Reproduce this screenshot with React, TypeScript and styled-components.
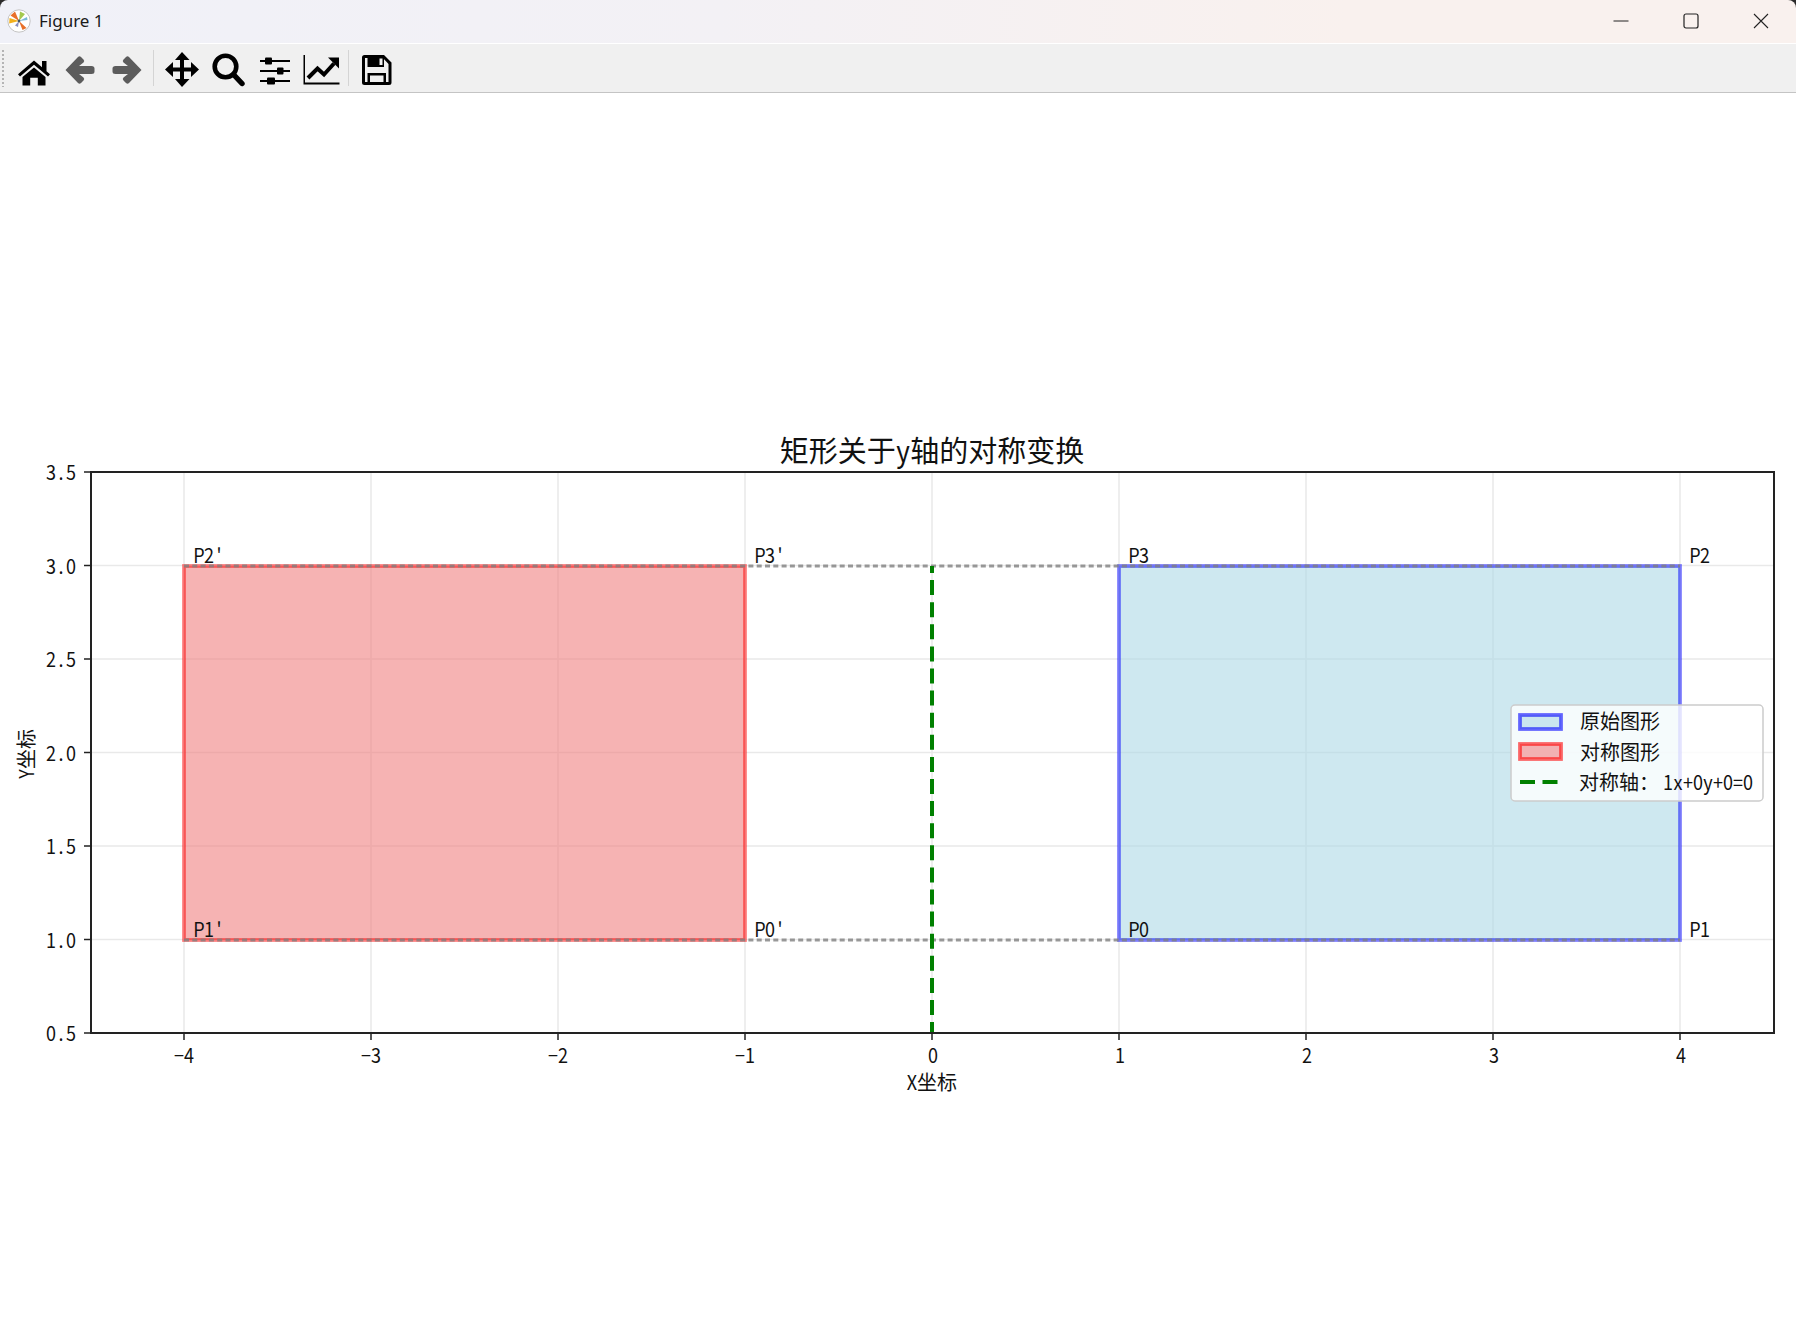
import React from 'react';
import styled, { createGlobalStyle } from 'styled-components';

const GlobalStyle = createGlobalStyle`
  html, body {
    margin: 0;
    padding: 0;
    background: #fff;
    overflow: hidden;
  }
`;

const Window = styled.div`
  width: 1796px;
  height: 1319px;
  display: flex;
  flex-direction: column;
  background: #2b2b2b;
  font-family: 'Noto Sans', 'Noto Sans CJK SC', sans-serif;
`;

const TitleBar = styled.div`
  height: 43px;
  flex: none;
  display: flex;
  align-items: center;
  justify-content: space-between;
  padding-left: 7px;
  border-radius: 8px 8px 0 0;
  background: linear-gradient(90deg, #f0f1f8 0%, #f3f1f5 40%, #f9f1ee 75%, #f9f1ee 100%);
  border-bottom: 1px solid #fff;
`;

const TitleGroup = styled.div`
  display: flex;
  align-items: center;
  gap: 8px;
  padding-bottom: 2px;
`;

const TitleText = styled.span`
  font-size: 17px;
  color: #1a1a1a;
`;

const WinButtons = styled.div`
  display: flex;
  align-items: center;
  height: 100%;
`;

const WinButton = styled.div`
  width: 70px;
  height: 100%;
  display: flex;
  align-items: center;
  justify-content: center;
  padding-bottom: 2px;
  box-sizing: border-box;
`;

const Toolbar = styled.div`
  height: 48px;
  flex: none;
  display: flex;
  align-items: center;
  background: #f0f0f0;
  border-bottom: 1px solid #c4c4c4;
  padding-left: 2px;
`;

const Grip = styled.div`
  width: 2px;
  height: 38px;
  margin-right: 6.5px;
  flex: none;
  background-image: radial-gradient(circle, #b4b4b4 0.8px, transparent 1px);
  background-size: 2px 4px;
`;

const ToolButton = styled.svg<{ $muted?: boolean }>`
  width: 46.5px;
  height: 48px;
  flex: none;
  display: block;
  color: ${(p) => (p.$muted ? '#5c5c5c' : '#000')};
  fill: currentColor;
  stroke: none;
`;

const Separator = styled.div`
  width: 1px;
  height: 36px;
  margin: 0 4.5px 0 3px;
  background: #d4d4d4;
  flex: none;
`;

const Canvas = styled.div`
  flex: 1;
  background: #fff;
  min-height: 0;
`;

const Plot = styled.svg`
  display: block;
  width: 1796px;
  height: 1226px;
`;

const Label = styled.text<{ $size: number }>`
  font-family: 'Noto Sans CJK SC', 'Liberation Sans', sans-serif;
  font-size: ${(p) => p.$size}px;
  fill: #111;
`;

// pixel mapping of the data axes, svg origin sits under the toolbar
const TOP = 93;
const xPx = (v: number) => 932 + v * 187;
const yPx = (v: number) => 1033 - (v - 0.5) * 187;

const isWide = (c: string) => c.charCodeAt(0) > 0x2e80;

// SimHei look: every latin glyph sits in a half cell, cjk in a full cell
function CellText({ x, y, size, children, anchor = 'start', rotate }: {
  x: number; y: number; size: number; children: string; anchor?: 'start' | 'middle' | 'end'; rotate?: boolean;
}) {
  const chars = Array.from(children);
  const total = chars.reduce((sum, c) => sum + (isWide(c) ? size : size / 2), 0);
  let pos = anchor === 'start' ? 0 : anchor === 'middle' ? -total / 2 : -total;
  return (
    <g transform={`translate(${x} ${y})${rotate ? ' rotate(-90)' : ''}`}>
      {chars.map((c, i) => {
        const wide = isWide(c);
        const cell = wide ? size : size / 2;
        const at = pos + cell / 2;
        pos += cell;
        return (
          <Label
            key={i}
            $size={size}
            textAnchor="middle"
            transform={wide ? `translate(${at} 0)` : `translate(${at} 0) scale(0.9 1)`}
          >
            {c}
          </Label>
        );
      })}
    </g>
  );
}

const xTicks = [-4, -3, -2, -1, 0, 1, 2, 3, 4];
const yTicks = [0.5, 1, 1.5, 2, 2.5, 3, 3.5];

const points = [
  { name: 'P0', x: 1, y: 1 },
  { name: 'P1', x: 4, y: 1 },
  { name: 'P2', x: 4, y: 3 },
  { name: 'P3', x: 1, y: 3 },
  { name: "P0'", x: -1, y: 1 },
  { name: "P1'", x: -4, y: 1 },
  { name: "P2'", x: -4, y: 3 },
  { name: "P3'", x: -1, y: 3 },
];

function MplLogo() {
  return (
    <svg width="24" height="24" viewBox="0 0 24 24">
      <circle cx="12" cy="12" r="11.2" fill="#fff" stroke="#bdbdbd" strokeWidth="0.9" />
      <path d="M12 12 L3.5 6.5 L8 2.5 Z" fill="#e8702a" />
      <path d="M12 12 L2.5 9 L2.2 14.5 Z" fill="#f2b01e" />
      <path d="M12 12 L13 2.5 L18 5 Z" fill="#a4c94e" />
      <path d="M12 12 L20 8 L20.5 11 Z" fill="#7ab9d8" />
      <path d="M12 12 L19.5 19 L15.5 21 Z" fill="#e8702a" />
      <path d="M12 12 L11 18 L8 16.5 Z" fill="#8a8fc0" />
      <circle cx="12" cy="12" r="1.4" fill="#44586a" />
    </svg>
  );
}

// the toolbar glyphs are drawn in a 46.5x48 cell
function HomeIcon() {
  return (
    <ToolButton viewBox="0 0 46.5 48">
      <path d="M23 16.5 L31 23.3 V17 H35.5 V27.2 L39 30.2 L37 32.6 L23 20.8 L9 32.6 L7 30.2 Z" />
      <path d="M23 23.5 L34.5 33 V41.5 H26.8 V33.8 H19.2 V41.5 H11.5 V33 Z" />
    </ToolButton>
  );
}

function BackIcon() {
  return (
    <ToolButton $muted viewBox="0 0 46.5 48">
      <path d="M8.5 26 L21 13 Q22.5 11.5 24 13 L26.5 15.5 Q28 17 26.5 18.5 L22 22 H34.5 Q37.5 22 37.5 24.5 V27.5 Q37.5 30 34.5 30 H22 L26.5 33.5 Q28 35 26.5 36.5 L24 39 Q22.5 40.5 21 39 Z" />
    </ToolButton>
  );
}

function ForwardIcon() {
  return (
    <ToolButton $muted viewBox="0 0 46.5 48">
      <path d="M37.5 26 L25 13 Q23.5 11.5 22 13 L19.5 15.5 Q18 17 19.5 18.5 L24 22 H11.5 Q8.5 22 8.5 24.5 V27.5 Q8.5 30 11.5 30 H24 L19.5 33.5 Q18 35 19.5 36.5 L22 39 Q23.5 40.5 25 39 Z" />
    </ToolButton>
  );
}

function MoveIcon() {
  return (
    <ToolButton viewBox="0 0 46.5 48">
      <path d="M23 8 L30.5 16 H16 Z M23 43 L30.5 35 H16 Z M6 25.5 L14 18 V33 Z M40 25.5 L32 18 V33 Z" />
      <path d="M21 14 H25 V23.5 H34 V27.5 H25 V37 H21 V27.5 H12 V23.5 H21 Z" />
    </ToolButton>
  );
}

function ZoomIcon() {
  return (
    <ToolButton viewBox="0 0 46.5 48">
      <circle cx="20.5" cy="22.5" r="10.8" fill="none" stroke="currentColor" strokeWidth="4.6" />
      <path d="M28.5 30.5 L37 39.5" fill="none" stroke="currentColor" strokeWidth="5.4" strokeLinecap="round" />
    </ToolButton>
  );
}

function SlidersIcon() {
  return (
    <ToolButton viewBox="0 0 46.5 48">
      <rect x="8" y="16" width="30" height="2" />
      <rect x="8" y="26" width="30" height="2" />
      <rect x="8" y="36" width="30" height="2" />
      <rect x="13" y="13.5" width="7" height="7" rx="1" />
      <rect x="25" y="23.5" width="6.5" height="7" rx="1" />
      <rect x="15" y="33.5" width="8" height="7" rx="1" />
    </ToolButton>
  );
}

function ChartIcon() {
  return (
    <ToolButton viewBox="0 0 46.5 48">
      <path d="M5.5 11 H7 V38.5 H41.5 V40.5 H5.5 Z" />
      <path d="M10 34 L19.5 24.5 L26 30.5 L36 19.5" fill="none" stroke="currentColor" strokeWidth="4" />
      <path d="M30 13.5 H41 V24.5 Z" />
    </ToolButton>
  );
}

function SaveIcon() {
  return (
    <ToolButton viewBox="0 0 46.5 48">
      <path
        fillRule="evenodd"
        d="M11.5 11 H31 L38.5 18.5 V38.5 Q38.5 41 36 41 H11.5 Q9 41 9 38.5 V13.5 Q9 11 11.5 11 Z M12 14 V38 H35.5 V20 L30 14 Z"
      />
      <path d="M14.5 13 H31 V23 H14.5 Z" />
      <rect x="26.5" y="14.5" width="3" height="6.5" fill="#f0f0f0" />
      <path fillRule="evenodd" d="M14.5 29 H33 V40 H14.5 Z M17 31.5 V38 H30.5 V31.5 Z" />
    </ToolButton>
  );
}

export default function App() {
  return (
    <Window>
      <GlobalStyle />
      <TitleBar>
        <TitleGroup>
          <MplLogo />
          <TitleText>Figure 1</TitleText>
        </TitleGroup>
        <WinButtons>
          <WinButton>
            <svg width="16" height="16" viewBox="0 0 16 16"><path d="M0.5 8h15" stroke="#222" strokeWidth="1" /></svg>
          </WinButton>
          <WinButton>
            <svg width="16" height="16" viewBox="0 0 16 16"><rect x="1" y="1" width="14" height="14" rx="2" fill="none" stroke="#222" strokeWidth="1.2" /></svg>
          </WinButton>
          <WinButton>
            <svg width="16" height="16" viewBox="0 0 16 16"><path d="M1 1l14 14M15 1L1 15" stroke="#222" strokeWidth="1.1" /></svg>
          </WinButton>
        </WinButtons>
      </TitleBar>
      <Toolbar>
        <Grip />
        <HomeIcon />
        <BackIcon />
        <ForwardIcon />
        <Separator />
        <MoveIcon />
        <ZoomIcon />
        <SlidersIcon />
        <ChartIcon />
        <Separator />
        <SaveIcon />
      </Toolbar>
      <Canvas>
        <Plot viewBox={`0 ${TOP} 1796 1226`}>
          {/* grid */}
          {xTicks.map((t) => (
            <line key={t} x1={xPx(t)} x2={xPx(t)} y1={472} y2={1033} stroke="#e9e9e9" strokeWidth={1.5} />
          ))}
          {yTicks.slice(1, -1).map((t) => (
            <line key={t} x1={91} x2={1774} y1={yPx(t)} y2={yPx(t)} stroke="#e9e9e9" strokeWidth={1.5} />
          ))}

          {/* rectangles */}
          <rect x={1119} y={566} width={561} height={374} fill="#add8e6" fillOpacity={0.6} stroke="#0000ff" strokeOpacity={0.5} strokeWidth={3.75} />
          <rect x={184} y={566} width={561} height={374} fill="#f08080" fillOpacity={0.6} stroke="#ff0000" strokeOpacity={0.5} strokeWidth={3.75} />

          {/* connectors */}
          {[566, 940].map((y) => (
            <line key={y} x1={184} x2={1680} y1={y} y2={y} stroke="#808080" strokeOpacity={0.8} strokeWidth={3} strokeDasharray="5 3.3" />
          ))}

          {/* axis of symmetry */}
          <line x1={932} x2={932} y1={566} y2={1033} stroke="#008000" strokeWidth={4} strokeDasharray="15 7.1" strokeDashoffset={8} />

          {points.map((p) => (
            <CellText key={p.name} x={xPx(p.x) + 10} y={yPx(p.y) - 3} size={20}>{p.name}</CellText>
          ))}

          {/* spines and ticks */}
          <rect x={91} y={472} width={1683} height={561} fill="none" stroke="#222" strokeWidth={2} />
          {xTicks.map((t) => (
            <g key={t}>
              <line x1={xPx(t)} x2={xPx(t)} y1={1033} y2={1040} stroke="#222" strokeWidth={1.5} />
              <CellText x={xPx(t) + (t < 0 ? 0 : 1)} y={1063} size={20} anchor="middle">{t < 0 ? `−${-t}` : String(t)}</CellText>
            </g>
          ))}
          {yTicks.map((t) => (
            <g key={t}>
              <line x1={84} x2={91} y1={yPx(t)} y2={yPx(t)} stroke="#222" strokeWidth={1.5} />
              <CellText x={76} y={yPx(t) + 8} size={20} anchor="end">{t.toFixed(1)}</CellText>
            </g>
          ))}

          <CellText x={932} y={462} size={29} anchor="middle">矩形关于y轴的对称变换</CellText>
          <CellText x={932} y={1090} size={20} anchor="middle">X坐标</CellText>
          <CellText x={34} y={754} size={20} anchor="middle" rotate>Y坐标</CellText>

          {/* legend */}
          <rect x={1511} y={705} width={252} height={96} rx={4} fill="#fff" fillOpacity={0.8} stroke="#ccc" strokeWidth={1.5} />
          <rect x={1520} y={715} width={41} height={14} fill="#add8e6" fillOpacity={0.6} stroke="#0000ff" strokeOpacity={0.6} strokeWidth={3.75} />
          <rect x={1520} y={744} width={41} height={15} fill="#f08080" fillOpacity={0.6} stroke="#ff0000" strokeOpacity={0.6} strokeWidth={3.75} />
          <line x1={1520} x2={1558} y1={782} y2={782} stroke="#008000" strokeWidth={4} strokeDasharray="15 7.5" />
          <CellText x={1580} y={729} size={20}>原始图形</CellText>
          <CellText x={1580} y={760} size={20}>对称图形</CellText>
          <CellText x={1579} y={790} size={20}>对称轴：</CellText>
          <CellText x={1663} y={790} size={20}>1x+0y+0=0</CellText>
        </Plot>
      </Canvas>
    </Window>
  );
}
